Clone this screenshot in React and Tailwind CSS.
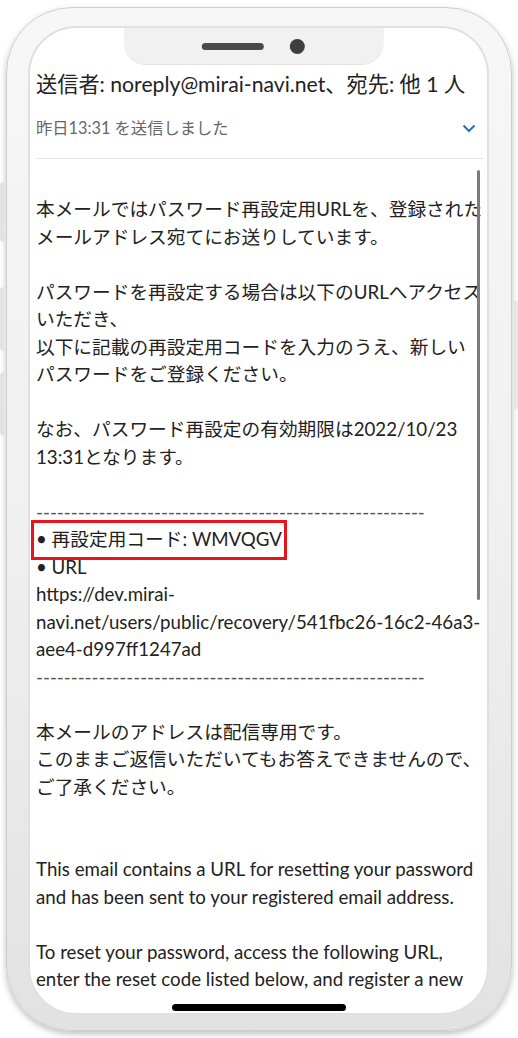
import React from "react";

const font = { fontFamily: "Lato, 'Noto Sans CJK JP', 'Noto Sans', sans-serif" };

const Line = ({ children, className = "" }) => (
  <div className={"whitespace-nowrap " + className}>{children}</div>
);

const Blank = () => <div className="h-[27.5px]" />;

const Dashes = () => (
  <Line className="text-[#555]">
    {"-".repeat(56)}
  </Line>
);

export default function App() {
  return (
    <div className="w-[518px] h-[1038px] bg-white overflow-hidden relative" style={font}>
      {/* side buttons */}
      <div className="absolute left-0 top-[182px] w-[4px] h-[60px] bg-[#e2e2e2] rounded-l" />
      <div className="absolute left-0 top-[287px] w-[4px] h-[64px] bg-[#e2e2e2] rounded-l" />
      <div className="absolute left-0 top-[372px] w-[4px] h-[64px] bg-[#e2e2e2] rounded-l" />
      <div className="absolute right-0 top-[300px] w-[4px] h-[110px] bg-[#e6e6e6] rounded-r" />

      <div className="mx-[6px] mt-[7px] h-[1024px] rounded-[66px] bg-gradient-to-b from-[#f7f7f7] via-[#f0f0f0] to-[#e2e2e2] border border-[#cdcdcd] shadow-[0_3px_6px_rgba(0,0,0,0.25)] pt-[20px] pl-[23px] pr-[24px] pb-[18px]">
        <div className="h-[985px] rounded-[46px] bg-white overflow-hidden relative ring-2 ring-[#e0e0e0]">
          {/* notch */}
          <div className="absolute left-1/2 -translate-x-[52%] top-0 w-[260px] h-[37px] bg-[#f1f1f1] rounded-b-[22px] flex items-center justify-center gap-[26px] border-b border-[#e3e3e3]">
            <div className="w-[62px] h-[7px] rounded-full bg-[#4a4a4a]" />
            <div className="w-[15px] h-[15px] rounded-full bg-[#3f3f3f]" />
          </div>

          {/* scrollbar */}
          <div className="absolute left-[447px] top-[142px] w-[3px] h-[430px] rounded bg-[#7b7b7b]" />

          <div className="pl-[6px] pt-[42px] text-[#222]">
            <div className="text-[21.2px] leading-[28px]">
              <Line>送信者: noreply@mirai-navi.net、宛先: 他 1 人</Line>
            </div>
            <div className="mt-[18px] flex items-center justify-between pr-[10px]">
              <span className="text-[16.3px] leading-[24px] text-[#666]">昨日13:31 を送信しました</span>
              <svg width="14" height="9" viewBox="0 0 14 9" className="mr-[1px]">
                <polyline points="1.5,1.5 7,7 12.5,1.5" fill="none" stroke="#2f6fae" strokeWidth="2" />
              </svg>
            </div>
            <div className="mt-[18px] mr-[3px] border-t border-[#e6e6e6]" />

            <div className="mt-[37px] text-[18.7px] leading-[27.5px]">
              <Line>本メールではパスワード再設定用URLを、登録された</Line>
              <Line>メールアドレス宛てにお送りしています。</Line>
              <Blank />
              <Line>パスワードを再設定する場合は以下のURLへアクセス</Line>
              <Line>いただき、</Line>
              <Line>以下に記載の再設定用コードを入力のうえ、新しい</Line>
              <Line>パスワードをご登録ください。</Line>
              <Blank />
              <Line>なお、パスワード再設定の有効期限は2022/10/23</Line>
              <Line>13:31となります。</Line>
              <Blank />
              <Dashes />
              <Line>
                <span className="relative inline-block">
                  • 再設定用コード: WMVQGV
                  <span className="absolute -left-[5px] -right-[5px] -top-[6px] -bottom-[6px] border-[3px] border-[#e8141b]" />
                </span>
              </Line>
              <Line>• URL</Line>
              <Line>https://dev.mirai-</Line>
              <Line>navi.net/users/public/recovery/541fbc26-16c2-46a3-</Line>
              <Line>aee4-d997ff1247ad</Line>
              <Dashes />
              <Blank />
              <Line>本メールのアドレスは配信専用です。</Line>
              <Line>このままご返信いただいてもお答えできませんので、</Line>
              <Line>ご了承ください。</Line>
              <Blank />
              <Blank />
              <Line>This email contains a URL for resetting your password</Line>
              <Line>and has been sent to your registered email address.</Line>
              <Blank />
              <Line>To reset your password, access the following URL,</Line>
              <Line>enter the reset code listed below, and register a new</Line>
            </div>
          </div>

          {/* home indicator */}
          <div className="absolute left-1/2 -translate-x-1/2 bottom-[2px] w-[174px] h-[7px] rounded-full bg-black" />
        </div>
      </div>
    </div>
  );
}
